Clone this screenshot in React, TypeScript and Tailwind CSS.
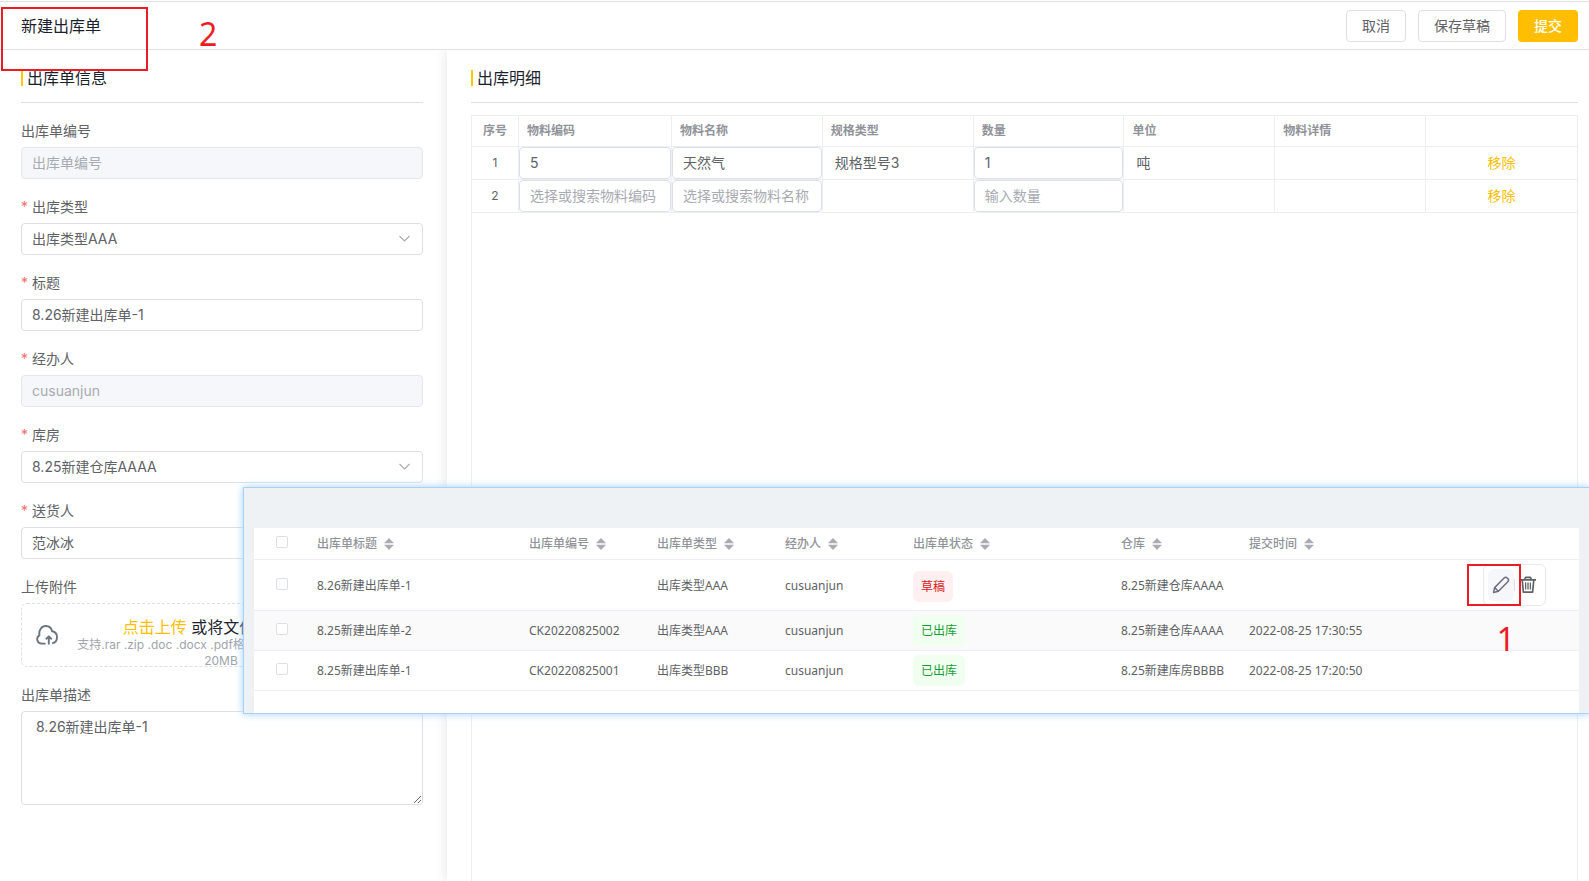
import { ReactNode } from "react";

const details = [
  { code: "5", name: "天然气", spec: "规格型号3", count: "1", unit: "吨" },
  { code: "", name: "", spec: "", count: "", unit: "" },
];

const orderColumns = [
  { title: "出库单标题", width: "w-[212px]" },
  { title: "出库单编号", width: "w-[128px]" },
  { title: "出库单类型", width: "w-[128px]" },
  { title: "经办人", width: "w-[128px]" },
  { title: "出库单状态", width: "w-[208px]" },
  { title: "仓库", width: "w-[128px]" },
  { title: "提交时间", width: "w-[208px]" },
];

const orders = [
  {
    title: "8.26新建出库单-1",
    code: "",
    type: "出库类型AAA",
    user: "cusuanjun",
    status: "草稿",
    store: "8.25新建仓库AAAA",
    time: "",
  },
  {
    title: "8.25新建出库单-2",
    code: "CK20220825002",
    type: "出库类型AAA",
    user: "cusuanjun",
    status: "已出库",
    store: "8.25新建仓库AAAA",
    time: "2022-08-25 17:30:55",
  },
  {
    title: "8.25新建出库单-1",
    code: "CK20220825001",
    type: "出库类型BBB",
    user: "cusuanjun",
    status: "已出库",
    store: "8.25新建库房BBBB",
    time: "2022-08-25 17:20:50",
  },
];

const controlClass =
  "block h-8 w-full rounded border border-[#dcdfe6] bg-white px-[10px] text-sm text-[#606266] placeholder:text-[#a8abb2] disabled:border-[#e4e7ed] disabled:bg-[#f5f7fa] disabled:text-[#a8abb2] outline-none";
const inputClass = `${controlClass} pb-0.5`;

function SortIcon() {
  return (
    <svg width="10" height="12" viewBox="0 0 10 12" fill="#a8abb2" aria-hidden="true">
      <path d="M5 0l5 5.2H0z" />
      <path d="M5 12l5-5.2H0z" />
    </svg>
  );
}

function PencilIcon() {
  return (
    <svg
      width="18"
      height="18"
      viewBox="0 0 18 18"
      fill="none"
      stroke="#6b6f7d"
      strokeWidth="1.5"
      strokeLinejoin="round"
      aria-hidden="true"
    >
      <path d="M1.6 16.4l1-4.8L12.1 2a2.2 2.2 0 0 1 3.1 0l.6.6a2.2 2.2 0 0 1 0 3.1l-9.4 9.6z" />
      <path d="M2.6 11.6l3.8 3.7" />
    </svg>
  );
}

function TrashIcon() {
  return (
    <svg
      width="16"
      height="18"
      viewBox="0 0 16 18"
      fill="none"
      stroke="#606266"
      strokeWidth="1.7"
      strokeLinejoin="round"
      aria-hidden="true"
    >
      <path d="M0 3.8h16M4.6 3.5L5.600 1.400h4.800l1 2.100M2.200 4l1.200 12.200h9.200L13.800 4" />
      <path d="M5.600 6.500v7M8 6.500v7M10.400 6.500v7" strokeWidth="1.300" />
    </svg>
  );
}

function CloudUploadIcon() {
  return (
    <svg
      width="22"
      height="20"
      viewBox="0 0 22 20"
      fill="none"
      stroke="#6b7580"
      strokeWidth="1.9"
      strokeLinejoin="round"
      aria-hidden="true"
    >
      <path d="M9.600 18.600H5.600a4.400 4.400 0 0 1-2.200-8.200C2.600 5 5.400 1 9.900 1c3.400 0 5.600 2.200 6.200 5.300 3 .6 4.900 2.800 4.900 5.900 0 3.200-2 5.600-4.800 6" />
      <path d="M12.800 19.400v-7M9.800 14.200l3-2.800 3 2.800" />
    </svg>
  );
}

function ChevronIcon() {
  return (
    <svg
      className="pointer-events-none absolute right-3 top-3"
      width="12"
      height="8"
      viewBox="0 0 12 8"
      fill="none"
      stroke="#a8abb2"
      strokeWidth="1.1"
      aria-hidden="true"
    >
      <path d="M.5 1l5 5 5-5" />
    </svg>
  );
}

type FieldProps = {
  id: string;
  label: string;
  required?: boolean;
  children: ReactNode;
};

function Field({ id, label, required, children }: FieldProps) {
  return (
    <div className="mb-[17px]">
      <label htmlFor={id} className="mb-[5px] flex gap-1 text-sm leading-[22px] text-[#606266]">
        {required && <span className="text-[#f56c6c]">*</span>}
        {label}
      </label>
      {children}
    </div>
  );
}

function SelectField({ id, value }: { id: string; value: string }) {
  return (
    <div className="relative">
      <select id={id} className={`${controlClass} appearance-none`}>
        <option>{value}</option>
      </select>
      <ChevronIcon />
    </div>
  );
}

function PanelTitle({ children }: { children: ReactNode }) {
  return (
    <div className="mb-3 flex h-[53px] items-center border-b border-[#dcdfe6] pt-[4px]">
      <h2 className="flex items-center gap-1 text-base leading-4 text-[#1c1f2e]">
        <span className="h-4 w-[2px] bg-[#ffc800]" />
        {children}
      </h2>
    </div>
  );
}

function OrderForm() {
  return (
    <section className="w-[447px] shrink-0 pl-[21px] pr-6">
      <PanelTitle>出库单信息</PanelTitle>
      <form className="pt-[5px]">
        <Field id="code" label="出库单编号">
          <input id="code" className={inputClass} placeholder="出库单编号" disabled />
        </Field>
        <Field id="type" label="出库类型" required>
          <SelectField id="type" value="出库类型AAA" />
        </Field>
        <Field id="title" label="标题" required>
          <input id="title" className={inputClass} defaultValue="8.26新建出库单-1" />
        </Field>
        <Field id="operator" label="经办人" required>
          <input id="operator" className={inputClass} defaultValue="cusuanjun" disabled />
        </Field>
        <Field id="store" label="库房" required>
          <SelectField id="store" value="8.25新建仓库AAAA" />
        </Field>
        <Field id="sender" label="送货人" required>
          <input id="sender" className={inputClass} defaultValue="范冰冰" />
        </Field>
        <Field id="upload" label="上传附件">
          <button
            id="upload"
            type="button"
            className="flex h-16 w-full items-center rounded-md border border-dashed border-[#dcdfe6] pl-[14px] pr-[56px]"
          >
            <CloudUploadIcon />
            <span className="ml-[18px] flex-1 text-center">
              <span className="block pt-4 text-base leading-5 text-[#1c1f2e]">
                <span className="text-[#ffbf00]">点击上传</span> 或将文件拖到此处
              </span>
              <span className="block text-xs leading-4 text-[#a0a4ad]">
                <span className="block whitespace-nowrap">
                  支持.rar .zip .doc .docx .pdf格式的文件，单个不超过
                </span>
                20MB
              </span>
            </span>
          </button>
        </Field>
        <Field id="remark" label="出库单描述">
          <textarea
            id="remark"
            className="block h-[94px] w-full rounded border border-[#dcdfe6] px-[14px] py-1 text-sm leading-[21px] text-[#606266] outline-none"
            defaultValue="8.26新建出库单-1"
          />
        </Field>
      </form>
    </section>
  );
}

function DetailTable() {
  const cell = "h-[33px] border-b border-r border-[#ebeef5] p-0 last:border-r-0";
  const head =
    "h-[31px] border-b border-r border-[#ebeef5] px-2 text-xs font-bold text-[#909399] last:border-r-0";
  return (
    <section className="flex min-w-0 flex-1 flex-col bg-white pl-6 pr-[11px] shadow-[0_0_12px_rgba(0,0,0,0.12)]">
      <PanelTitle>出库明细</PanelTitle>
      <div className="flex-1 border-x border-t border-[#ebeef5]">
        <table className="w-full table-fixed border-separate border-spacing-0">
          <thead>
            <tr className="text-left">
              <th className={`${head} w-[47px] text-center`}>序号</th>
              <th className={`${head} w-[153px]`}>物料编码</th>
              <th className={head}>物料名称</th>
              <th className={head}>规格类型</th>
              <th className={head}>数量</th>
              <th className={head}>单位</th>
              <th className={head}>物料详情</th>
              <th className={head} aria-label="操作" />
            </tr>
          </thead>
          <tbody className="text-sm text-[#606266]">
            {details.map((row, index) => (
              <tr key={index}>
                <td className={`${cell} text-center text-xs`}>{index + 1}</td>
                <td className={cell}>
                  <input
                    className={inputClass}
                    aria-label="物料编码"
                    placeholder="选择或搜索物料编码"
                    defaultValue={row.code}
                  />
                </td>
                <td className={cell}>
                  <input
                    className={inputClass}
                    aria-label="物料名称"
                    placeholder="选择或搜索物料名称"
                    defaultValue={row.name}
                  />
                </td>
                <td className={cell}>
                  <span className="px-3">{row.spec}</span>
                </td>
                <td className={cell}>
                  <input
                    className={inputClass}
                    aria-label="数量"
                    placeholder="输入数量"
                    defaultValue={row.count}
                  />
                </td>
                <td className={cell}>
                  <span className="px-3">{row.unit}</span>
                </td>
                <td className={cell} />
                <td className={`${cell} text-center`}>
                  <button type="button" className="text-[#ffbf00]">
                    移除
                  </button>
                </td>
              </tr>
            ))}
          </tbody>
        </table>
      </div>
    </section>
  );
}

function CheckBox({ label }: { label: string }) {
  return (
    <input
      type="checkbox"
      aria-label={label}
      className="mb-1 block h-3 w-3 appearance-none rounded-xs border border-[#dcdfe6] bg-white"
    />
  );
}

function OrderList() {
  return (
    <div className="absolute left-[244px] right-0 top-[488px] bg-[#eef2f5] pl-[10px] pr-[10px] pt-10 font-['Noto_Sans','Noto_Sans_CJK_SC',sans-serif] shadow-[0_0_0_1px_#a9d1fb,0_0_8px_1px_#a5d0fb]">
      <div className="bg-white pb-[22px]">
        <table className="w-full table-fixed border-separate border-spacing-0 text-xs text-[#606266]">
          <thead>
            <tr>
              <th className="h-8 w-[51px] border-b border-[#ebeef5] pl-[22px]">
                <CheckBox label="全选" />
              </th>
              {orderColumns.map((column) => (
                <th
                  key={column.title}
                  className={`${column.width} border-b border-[#ebeef5] pl-3 text-left font-medium text-[#909399]`}
                >
                  <span className="flex items-center gap-[7px]">
                    {column.title}
                    <SortIcon />
                  </span>
                </th>
              ))}
              <th className="border-b border-[#ebeef5]" aria-label="操作" />
            </tr>
          </thead>
          <tbody>
            {orders.map((order, index) => {
              const draft = order.status === "草稿";
              const cell = `${draft ? "h-[51px] pt-0.5" : "h-10"} border-b border-[#ebeef5] pl-3 whitespace-nowrap`;
              return (
                <tr key={order.title} className={index % 2 ? "bg-[#fafafa]" : "bg-white"}>
                  <td className={`${draft ? "pt-0.5" : ""} border-b border-[#ebeef5] pl-[22px]`}>
                    <CheckBox label={order.title} />
                  </td>
                  <td className={cell}>{order.title}</td>
                  <td className={cell}>{order.code}</td>
                  <td className={cell}>{order.type}</td>
                  <td className={cell}>{order.user}</td>
                  <td className={cell}>
                    <span
                      className={`inline-block rounded-md px-2 align-middle leading-[31px] ${
                        draft ? "bg-[#fef0f0] text-[#e02020]" : "bg-[#f0fff0] text-[#16a034]"
                      }`}
                    >
                      {order.status}
                    </span>
                  </td>
                  <td className={cell}>{order.store}</td>
                  <td className={cell}>{order.time}</td>
                  <td className="border-b border-[#ebeef5] pr-[33px]">
                    {draft && (
                      <div className="ml-auto flex h-[42px] w-[63px] items-center rounded-md border border-[#e8e9ec] pl-1">
                        <button
                          type="button"
                          aria-label="编辑"
                          className="flex h-8 w-[26px] items-center justify-center rounded-md bg-[#f5f7fa]"
                        >
                          <PencilIcon />
                        </button>
                        <span className="h-3 w-px bg-[#dcdfe6]" />
                        <button type="button" aria-label="删除" className="ml-[5px]">
                          <TrashIcon />
                        </button>
                      </div>
                    )}
                  </td>
                </tr>
              );
            })}
          </tbody>
        </table>
      </div>
      <div className="absolute right-[68px] top-[76px] h-[42px] w-[54px] border-2 border-[#ed1c24]" />
      <span className="absolute right-[74px] top-[135px] text-[32px] leading-8 text-[#ed1c24]">1</span>
    </div>
  );
}

export default function App() {
  const button = "h-8 rounded border border-[#dcdfe6] px-[15px] text-sm text-[#606266]";
  return (
    <div className="relative flex h-screen flex-col overflow-hidden bg-white font-['Inter','Noto_Sans_CJK_SC',sans-serif]">
      <header className="mt-px flex h-[49px] shrink-0 items-center justify-between border-y border-[#e0e1e3] pl-[21px] pr-[11px]">
        <h1 className="text-base text-[#1c1f2e]">新建出库单</h1>
        <div className="flex gap-3">
          <button type="button" className={button}>
            取消
          </button>
          <button type="button" className={button}>
            保存草稿
          </button>
          <button
            type="button"
            className="h-8 rounded bg-[#ffbf00] px-4 text-sm font-medium text-white"
          >
            提交
          </button>
        </div>
      </header>
      <main className="flex min-h-0 flex-1 overflow-hidden">
        <OrderForm />
        <DetailTable />
      </main>
      <OrderList />
      <div className="absolute left-px top-[7px] h-16 w-[147px] border-2 border-[#ed1c24]" />
      <span className="absolute left-[199px] top-[18px] font-['Noto_Sans',sans-serif] text-[32px] leading-8 text-[#ed1c24]">
        2
      </span>
    </div>
  );
}
